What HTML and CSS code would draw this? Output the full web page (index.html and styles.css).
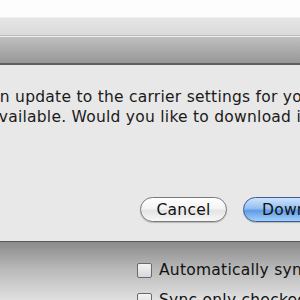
FILE: index.html
```html
<!DOCTYPE html>
<html>
<head>
<meta charset="utf-8">
<link rel="stylesheet" href="styles.css">
</head>
<body>
<div class="screen">
  <div class="desk"></div>
  <div class="titlebar"></div>
  <div class="toolbar"></div>
  <div class="sheet">
    <p class="message">An update to the carrier settings for your iPhone is<br>available. Would you like to download it?</p>
    <div class="buttons">
      <button class="btn">Cancel</button>
      <button class="btn btn-default">Download and Update</button>
    </div>
  </div>
  <div class="panel">
    <label class="check"><span class="box"></span>Automatically sync when this iPhone is connected</label>
    <label class="check"><span class="box"></span>Sync only checked songs and videos</label>
  </div>
</div>
</body>
</html>
```
FILE: styles.css
```css
html, body {
  margin: 0;
  padding: 0;
}
body {
  width: 300px;
  height: 300px;
  overflow: hidden;
  font-family: "DejaVu Sans", "Liberation Sans", sans-serif;
  font-size: 15.5px;
  letter-spacing: 0.25px;
  color: #1a1a1a;
}
.screen {
  width: 300px;
  height: 300px;
  display: flex;
  flex-direction: column;
  overflow: hidden;
}
.desk {
  height: 17px;
  background: #fdfdfd;
  flex: none;
}
.titlebar {
  height: 18px;
  flex: none;
  background: linear-gradient(#e6e6e6, #dadada);
  border-bottom: 1px solid #bdbdbd;
  box-shadow: inset 0 1px 0 #f0f0f0;
}
.toolbar {
  height: 26px;
  flex: none;
  border-top: 1px solid #ececec;
  background: linear-gradient(#bfbfbf, #989898);
  border-bottom: 2px solid #5e5e5e;
}
.sheet {
  height: 176px;
  flex: none;
  background: #e8e8e8;
  border-bottom: 1px solid #5a5a5a;
  display: flex;
  flex-direction: column;
}
.message {
  margin: 22px 0 0 -11px;
  line-height: 20px;
  white-space: nowrap;
}
.buttons {
  display: flex;
  gap: 16px;
  margin-top: auto;
  margin-bottom: 19px;
  padding-left: 140px;
  white-space: nowrap;
}
.btn {
  flex: none;
  height: 25px;
  padding: 0;
  border-radius: 13px;
  border: 1px solid #7a7a7a;
  background: linear-gradient(#ffffff 0%, #f4f4f4 45%, #e4e4e4 55%, #f8f8f8 100%);
  box-shadow: 0 1px 1px rgba(0,0,0,0.2);
  font-family: inherit;
  font-size: 15.5px;
  letter-spacing: 0.25px;
  line-height: 22px;
  color: #111;
  width: 87px;
}
.btn-default {
  width: 220px;
  text-align: left;
  padding-left: 18px;
  border-color: #3a5c92;
  background: linear-gradient(#cfe3fb 0%, #94c0f2 45%, #5f9ce6 55%, #a3d0fb 100%);
}
.panel {
  flex: 1;
  background: linear-gradient(#8b8b8b, #b9b9b9 40%, #ededed);
  padding: 18px 0 0 137px;
  display: flex;
  flex-direction: column;
  gap: 10px;
}
.check {
  display: flex;
  align-items: center;
  gap: 7px;
  white-space: nowrap;
  color: #111;
  line-height: 20px;
}
.box {
  flex: none;
  width: 13px;
  height: 13px;
  border: 1px solid #6a6a6a;
  border-radius: 2px;
  background: linear-gradient(#f4f4f4, #d8d8d8);
}
```
